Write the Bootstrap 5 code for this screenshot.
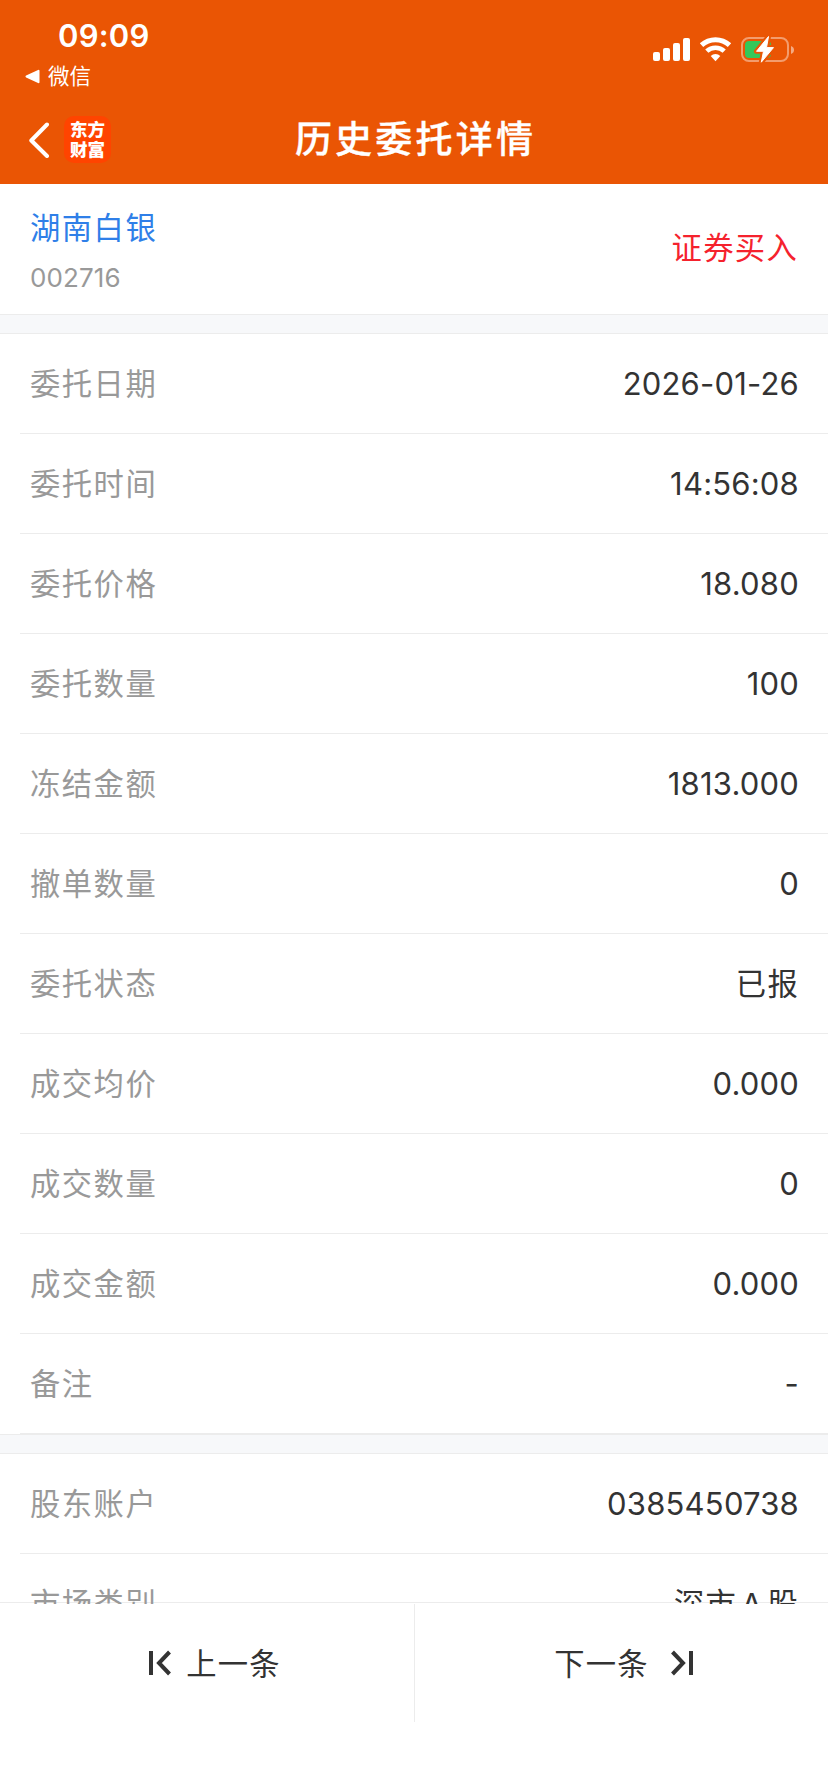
<!DOCTYPE html>
<html lang="zh-CN">
<head>
<meta charset="utf-8">
<meta name="viewport" content="width=device-width, initial-scale=1">
<title>历史委托详情</title>
<link href="https://cdn.jsdelivr.net/npm/bootstrap@5.3.0/dist/css/bootstrap.min.css" rel="stylesheet">
<style>
body{font-family:Inter,"Noto Sans CJK SC",sans-serif;color:#333;background:#fff;line-height:1}
.screen{height:1792px}
.topbar{height:184px;background:#ea5504}
.statusbar{height:92px;padding:0 34px 0 25px}
.clock{font-size:31px;font-weight:580;line-height:32px;padding:20px 0 0 33px;letter-spacing:.2px}
.from-app{font-size:21.5px;line-height:24px;margin-top:12px;gap:8px}
.titlebar{display:grid;grid-template-columns:1fr auto 1fr;height:92px;padding:0 28px}
.page-title{font-size:37px;font-weight:500;letter-spacing:3.2px;line-height:90px;margin:0;padding:3px 0 0 3px;-webkit-text-stroke:.35px #fff}
.back-group{gap:14px;padding-top:2px}
.app-logo{width:47px;height:47px;border-radius:10px;background:#ff4400;font-size:17.5px;line-height:19.5px;font-weight:900}
.stock-head{height:130px;padding:0 30px}
.stock-name{color:#2f7fe8;font-size:30.3px;letter-spacing:1.5px;line-height:40px;padding-top:2px}
.stock-code{color:#999;font-size:26px;line-height:30px;margin-top:15px;letter-spacing:.1px}
.side-buy{color:#f5222d;font-size:30.3px;letter-spacing:1.3px;padding-bottom:1px}
.band{height:20px;background:#f7f8fa;border-top:1px solid #ececec;border-bottom:1px solid #ececec}
.orders{--bs-list-group-border-color:#ececec;--bs-list-group-bg:transparent;padding-left:20px}
.orders .list-group-item{height:100px;padding:0 29px 0 10px;border-width:0 0 1px;color:#333;font-size:31px;letter-spacing:.2px}
.orders .list-group-item:last-child{border-bottom-width:1px}
.orders .k{color:#999;font-size:30.3px;letter-spacing:1.5px;padding-top:2px}
.orders .cn{font-size:30.3px;letter-spacing:1.3px;padding-top:2px}
.sheet{height:1420px;overflow:hidden;background:#fff}
.actions{height:190px;margin-top:-2px;border-top:1px solid #ececec}
.action{height:118px;margin-top:1px;font-size:30.3px;letter-spacing:1.2px;color:#333;border:0;background:none}
.action span{padding-top:2px}
.action + .action{border-left:1px solid #ececec}
.prev-icon{margin-right:15px}
.next-icon{margin-left:22px}
</style>
</head>
<body>
<div class="screen overflow-hidden d-flex flex-column">
  <header class="topbar text-white flex-shrink-0">
    <div class="statusbar d-flex justify-content-between align-items-start">
      <div>
        <div class="clock">09:09</div>
        <div class="from-app d-flex align-items-center">
          <svg width="15" height="15" viewBox="0 0 15 15"><path d="M1.5 7.5 13.5 1.8V13.2Z" fill="#fff" stroke="#fff" stroke-width="2" stroke-linejoin="round"/></svg>
          <span>微信</span>
        </div>
      </div>
      <svg width="142" height="70" viewBox="652 0 142 70" fill="none">
        <g fill="#fff"><rect x="653" y="52" width="7" height="9" rx="2"/><rect x="663" y="48" width="7" height="13" rx="2"/><rect x="673" y="43" width="7" height="18" rx="2"/><rect x="683" y="38" width="7" height="23" rx="2"/></g>
        <path d="M701.5 45.2a20.5 20.5 0 0 1 28 0" stroke="#fff" stroke-width="5"/>
        <path d="M706.8 51.2a12.6 12.6 0 0 1 17.4 0" stroke="#fff" stroke-width="4.6"/>
        <path d="M710.7 56a7 7 0 0 1 9.6 0l-4.8 5.2Z" fill="#fff"/>
        <rect x="742" y="38" width="46" height="23" rx="7" stroke="#fff" stroke-opacity=".42" stroke-width="2"/>
        <path d="M791 46c4 1.3 4 6.7 0 8Z" fill="#fff" fill-opacity=".5"/>
        <rect x="745" y="41" width="26" height="17" rx="4" fill="#34c759"/>
        <path d="M768.5 36.5 756.5 51.3h7l-2.2 10.9L773.5 47.6h-7Z" fill="#fff" stroke="#ea5504" stroke-width="5" stroke-linejoin="round"/>
        <path d="M768.5 36.5 756.5 51.3h7l-2.2 10.9L773.5 47.6h-7Z" fill="#fff" stroke="#fff" stroke-linejoin="round"/>
      </svg>
    </div>
    <div class="titlebar align-items-center">
      <div class="back-group d-flex align-items-center">
        <svg width="22" height="36" viewBox="0 0 22 36" fill="none" stroke="#fff" stroke-width="4" stroke-linecap="round" stroke-linejoin="round"><path d="M19 2.5 3.3 18.5 19 34"/></svg>
        <div class="app-logo d-flex flex-column align-items-center justify-content-center"><span>东方</span><span>财富</span></div>
      </div>
      <h1 class="page-title">历史委托详情</h1>
    </div>
  </header>
  <main class="sheet flex-shrink-0">
    <section class="stock-head d-flex justify-content-between align-items-center">
      <div><div class="stock-name">湖南白银</div><div class="stock-code">002716</div></div>
      <div class="side-buy">证券买入</div>
    </section>
    <div class="band"></div>
    <div class="orders list-group list-group-flush">
      <div class="list-group-item d-flex justify-content-between align-items-center"><span class="k">委托日期</span><span>2026-01-26</span></div>
      <div class="list-group-item d-flex justify-content-between align-items-center"><span class="k">委托时间</span><span>14:56:08</span></div>
      <div class="list-group-item d-flex justify-content-between align-items-center"><span class="k">委托价格</span><span>18.080</span></div>
      <div class="list-group-item d-flex justify-content-between align-items-center"><span class="k">委托数量</span><span>100</span></div>
      <div class="list-group-item d-flex justify-content-between align-items-center"><span class="k">冻结金额</span><span>1813.000</span></div>
      <div class="list-group-item d-flex justify-content-between align-items-center"><span class="k">撤单数量</span><span>0</span></div>
      <div class="list-group-item d-flex justify-content-between align-items-center"><span class="k">委托状态</span><span class="cn">已报</span></div>
      <div class="list-group-item d-flex justify-content-between align-items-center"><span class="k">成交均价</span><span>0.000</span></div>
      <div class="list-group-item d-flex justify-content-between align-items-center"><span class="k">成交数量</span><span>0</span></div>
      <div class="list-group-item d-flex justify-content-between align-items-center"><span class="k">成交金额</span><span>0.000</span></div>
      <div class="list-group-item d-flex justify-content-between align-items-center"><span class="k">备注</span><span>-</span></div>
    </div>
    <div class="band"></div>
    <div class="orders list-group list-group-flush">
      <div class="list-group-item d-flex justify-content-between align-items-center"><span class="k">股东账户</span><span>0385450738</span></div>
      <div class="list-group-item d-flex justify-content-between align-items-center"><span class="k">市场类别</span><span class="cn">深市<span class="mx-1">A</span>股</span></div>
    </div>
  </main>
  <footer class="actions d-flex align-items-start flex-shrink-0">
    <button class="action w-50 p-0 d-flex align-items-center justify-content-center ps-3" type="button">
      <svg class="prev-icon" width="22" height="26" viewBox="0 0 22 26" fill="none" stroke="#333" stroke-width="4"><path d="M2 1v24M20.5 2 10 13l10.5 11"/></svg><span>上一条</span>
    </button>
    <button class="action w-50 p-0 d-flex align-items-center justify-content-center ps-1" type="button">
      <span>下一条</span><svg class="next-icon" width="22" height="26" viewBox="0 0 22 26" fill="none" stroke="#333" stroke-width="4"><path d="M20 1v24M1.5 2 12 13 1.5 24"/></svg>
    </button>
  </footer>
</div>
<script src="https://cdn.jsdelivr.net/npm/bootstrap@5.3.0/dist/js/bootstrap.bundle.min.js"></script>
</body>
</html>
